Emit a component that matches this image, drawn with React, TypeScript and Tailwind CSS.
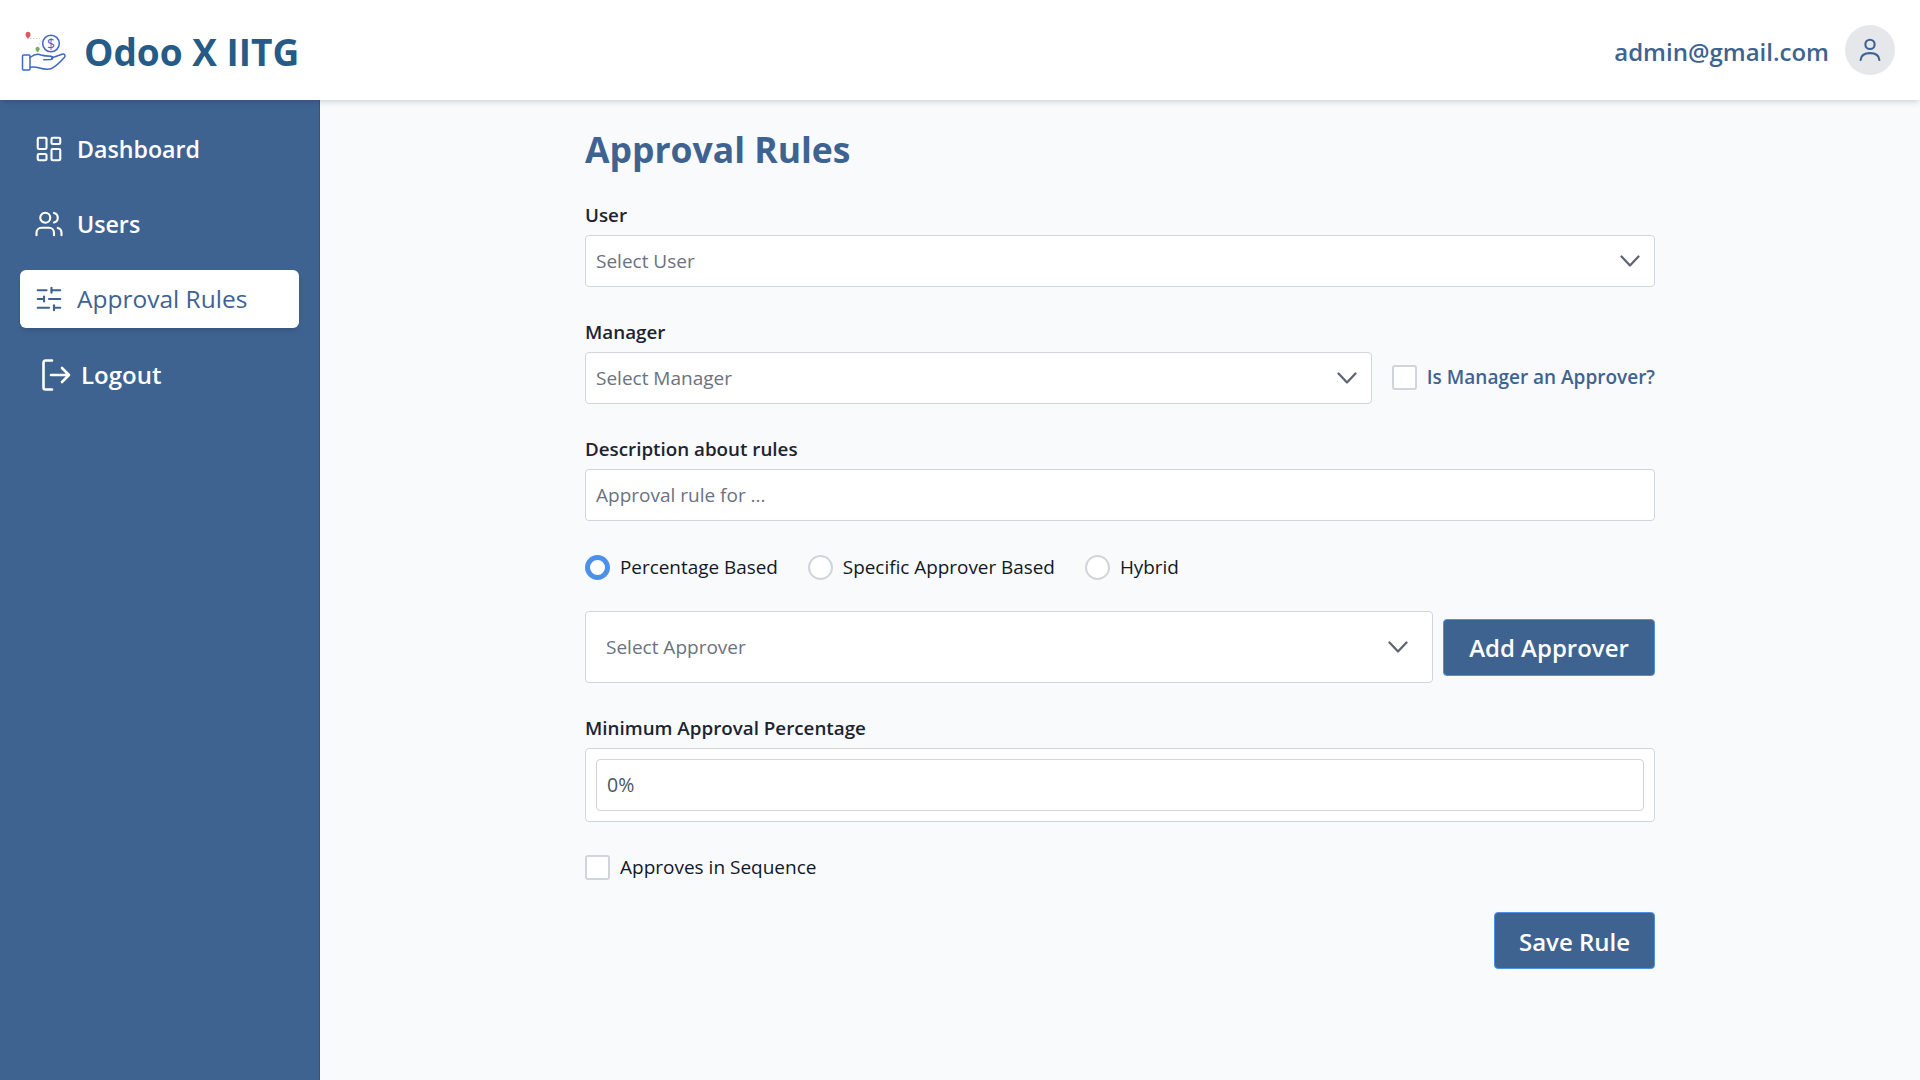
import React from "react";
import { LayoutDashboard, Users, SlidersHorizontal } from "lucide-react";

function Chevron() {
  return (
    <svg width="20" height="12" viewBox="0 0 20 12" fill="none" stroke="#5f6672" strokeWidth="2.300" strokeLinecap="round" strokeLinejoin="round" className="shrink-0">
      <polyline points="1.500,1.500 10,10.500 18.500,1.500" />
    </svg>
  );
}

function Logo() {
  return (
    <svg width="48" height="44" viewBox="0 0 48 44" fill="none" className="shrink-0 mt-[3px]">
      <path d="M4.500 4.500c0-1.500 1.100-2.700 2.500-2.700s2.600 1.200 2.600 2.700c0 1.800-2.600 4.300-2.600 4.300S4.500 6.300 4.500 4.500z" fill="#dc5a5f" />
      <path d="M9 8.500h9.500l1.500 3-3 4.500" stroke="#b9c0c8" strokeWidth="0.800" strokeDasharray="1.500 1.500" />
      <circle cx="30" cy="13.500" r="8.300" stroke="#3f68c4" strokeWidth="1.500" />
      <text x="30" y="19" textAnchor="middle" fontSize="14" fontFamily="'Open Sans', sans-serif" fill="#3f68c4">$</text>
      <path d="M14.500 19c0-1.200 1-2.200 2.100-2.200s2.100 1 2.100 2.200c0 1.400-2.100 3.400-2.100 3.400s-2.100-2-2.100-3.400z" fill="#74ad5b" />
      <rect x="1.500" y="25" width="7.500" height="15" rx="1" stroke="#3f68c4" strokeWidth="1.500" />
      <path d="M9 27.500c4-3 8-3.800 11-2.500 3 1 6 1.200 10 1.200 2.200 0 2.500 3-.2 3.300l-7 .3M30.500 28l10.500-3.700c2.300-.8 4 1.200 2.500 3-3.500 4-8.500 9-13 11.200-4 1.700-8.500.5-13-.8-2.500-.7-5.500-.7-8-.5" stroke="#3f68c4" strokeWidth="1.500" strokeLinecap="round" strokeLinejoin="round" />
    </svg>
  );
}

function Field({ label, children, className = "" }: { label: string; children: React.ReactNode; className?: string }) {
  return (
    <div className={className}>
      <div className="text-[18.800px] leading-[24px] font-semibold text-[#1b2430] mb-[8px]">{label}</div>
      {children}
    </div>
  );
}

function Select({ text, className = "" }: { text: string; className?: string }) {
  return (
    <div className={`h-[52px] flex items-center justify-between pl-[10px] pr-[14px] bg-white border border-[#d1d5db] rounded-[4px] text-[19px] text-[#6b7280] ${className}`}>
      <span>{text}</span>
      <Chevron />
    </div>
  );
}

function Radio({ label, checked = false }: { label: string; checked?: boolean }) {
  return (
    <div className="flex items-center gap-[10px]">
      <span className={checked ? "w-[25px] h-[25px] rounded-full bg-white border-[5px] border-[#4d90e8]" : "w-[25px] h-[25px] rounded-full bg-white border-2 border-[#d1d5db]"} />
      <span className="text-[18.900px] text-[#111827]">{label}</span>
    </div>
  );
}

function NavItem({ icon, label, active = false }: { icon: React.ReactNode; label: string; active?: boolean }) {
  return (
    <div className={`h-[58px] flex items-center gap-[13px] pl-[14px] rounded-[6px] ${active ? "bg-white text-[#3f6391] shadow-md text-[24.500px] font-medium" : "text-white text-[23.200px] font-semibold"}`}>
      {icon}
      <span className={active ? "" : "mt-px"}>{label}</span>
    </div>
  );
}

export default function App() {
  return (
    <div className="h-screen w-full flex flex-col overflow-hidden bg-[#f9fafb] font-['Open_Sans','Noto_Sans',sans-serif]">
      <header className="relative z-10 h-[100px] shrink-0 bg-white shadow-md flex items-center justify-between pl-[21px] pr-[25px]">
        <div className="flex items-center gap-[15px]">
          <Logo />
          <span className="text-[37px] font-bold text-[#265a87] mt-[4px]">Odoo X IITG</span>
        </div>
        <div className="flex items-center gap-[16px]">
          <span className="text-[24px] font-semibold text-[#3f6391] mt-[4px]">admin@gmail.com</span>
          <div className="w-[50px] h-[50px] rounded-full bg-[#e5e7eb] flex items-center justify-center">
            <svg width="30" height="30" viewBox="0 0 24 24" fill="none" stroke="#3f6391" strokeWidth="1.700" strokeLinecap="round">
              <circle cx="12" cy="7.500" r="3.700" />
              <path d="M4.500 20c.3-3.800 3.400-5.500 7.500-5.500s7.200 1.700 7.500 5.500" />
            </svg>
          </div>
        </div>
      </header>
      <div className="flex flex-1 min-h-0">
        <aside className="w-[320px] shrink-0 bg-[#3f6391] border-r border-[#36557d] px-[20px] pt-[20px] flex flex-col gap-[17px]">
          <NavItem icon={<LayoutDashboard size={30} strokeWidth={1.700} />} label="Dashboard" />
          <NavItem icon={<Users size={30} strokeWidth={1.700} />} label="Users" />
          <NavItem active icon={<SlidersHorizontal size={30} strokeWidth={1.700} />} label="Approval Rules" />
          <div className="h-[58px] mt-px flex items-center gap-[9px] pl-[20px] text-[24px] font-semibold text-white">
            <svg width="32" height="32" viewBox="0 0 32 32" fill="none" stroke="white" strokeWidth="2.600" strokeLinecap="round" strokeLinejoin="round">
              <path d="M12 1.500H5.500a2 2 0 0 0-2 2v25a2 2 0 0 0 2 2H12" />
              <path d="M11 16h18M22 9l7 7-7 7" />
            </svg>
            <span>Logout</span>
          </div>
        </aside>
        <main className="flex-1 min-w-0">
          <div className="w-[1070px] mx-auto pt-[20px]">
            <h1 className="text-[35.500px] leading-[58px] font-bold text-[#3f6391] mb-[25px]">Approval Rules</h1>
            <Field label="User" className="mb-[33px]">
              <Select text="Select User" />
            </Field>
            <Field label="Manager" className="mb-[33px]">
              <div className="flex items-center gap-[20px]">
                <Select text="Select Manager" className="flex-1" />
                <div className="flex items-center gap-[10px] -mt-[2px]">
                  <span className="w-[25px] h-[25px] rounded-[3px] bg-white border-2 border-[#d1d5db]" />
                  <span className="text-[19px] font-semibold text-[#3f6391]">Is Manager an Approver?</span>
                </div>
              </div>
            </Field>
            <Field label="Description about rules" className="mb-[33px]">
              <div className="h-[52px] flex items-center pl-[10px] bg-white border border-[#d1d5db] rounded-[4px] text-[19px] text-[#6b7280]">Approval rule for ...</div>
            </Field>
            <div className="flex items-center gap-[30px] h-[26px] mb-[31px]">
              <Radio checked label="Percentage Based" />
              <Radio label="Specific Approver Based" />
              <Radio label="Hybrid" />
            </div>
            <div className="flex items-center gap-[10px] mb-[33px]">
              <div className="flex-1 h-[72px] flex items-center justify-between pl-[20px] pr-[24px] bg-white border border-[#d1d5db] rounded-[4px] text-[19px] text-[#6b7280]">
                <span className="mt-px">Select Approver</span>
                <Chevron />
              </div>
              <button className="w-[212px] h-[57px] pt-[2px] rounded-[4px] bg-[#3f6391] border border-[#4d90e8] text-white text-[24px] font-semibold">Add Approver</button>
            </div>
            <Field label="Minimum Approval Percentage" className="mb-[32px]">
              <div className="h-[74px] p-[10px] bg-white border border-[#d1d5db] rounded-[4px]">
                <div className="h-[52px] flex items-center pl-[10px] border border-[#d1d5db] rounded-[4px] text-[19.500px] text-[#4b5563]">0%</div>
              </div>
            </Field>
            <div className="flex items-center gap-[10px] h-[26px] mb-[32px]">
              <span className="w-[25px] h-[25px] rounded-[3px] bg-white border-2 border-[#d1d5db]" />
              <span className="text-[19px] text-[#111827]">Approves in Sequence</span>
            </div>
            <div className="flex justify-end">
              <button className="w-[161px] h-[57px] pt-[2px] rounded-[4px] bg-[#3f6391] border border-[#4d90e8] text-white text-[24px] font-semibold">Save Rule</button>
            </div>
          </div>
        </main>
      </div>
    </div>
  );
}
